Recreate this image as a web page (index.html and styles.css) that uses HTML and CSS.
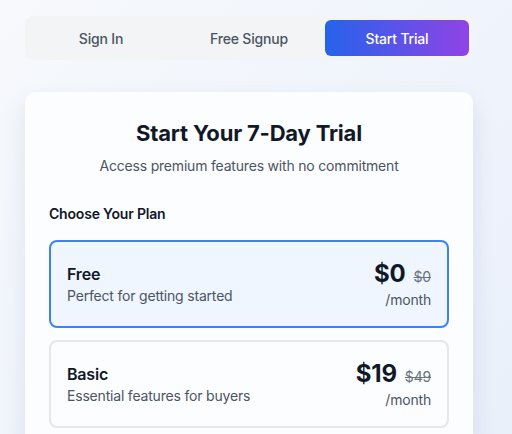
FILE: index.html
```html
<!DOCTYPE html>
<html>
<head>
<meta charset="utf-8">
<link rel="stylesheet" href="styles.css">
</head>
<body>
<div class="wrap">
  <nav class="tabs">
    <button class="tab">Sign In</button>
    <button class="tab">Free Signup</button>
    <button class="tab active">Start Trial</button>
  </nav>
  <main class="card">
    <h1 class="title">Start Your 7-Day Trial</h1>
    <p class="subtitle">Access premium features with no commitment</p>
    <h2 class="section">Choose Your Plan</h2>
    <div class="plans">
      <div class="plan selected">
        <div class="plan-info">
          <div class="plan-name">Free</div>
          <div class="plan-desc">Perfect for getting started</div>
        </div>
        <div class="plan-price">
          <div class="price-row"><span class="price">$0</span><span class="old">$0</span></div>
          <div class="per">/month</div>
        </div>
      </div>
      <div class="plan">
        <div class="plan-info">
          <div class="plan-name">Basic</div>
          <div class="plan-desc">Essential features for buyers</div>
        </div>
        <div class="plan-price">
          <div class="price-row"><span class="price">$19</span><span class="old">$49</span></div>
          <div class="per">/month</div>
        </div>
      </div>
    </div>
  </main>
</div>
</body>
</html>
```

FILE: styles.css
```css
* { box-sizing: border-box; }
html, body { margin: 0; padding: 0; }
body {
  font-family: Inter, "Noto Sans", sans-serif;
  letter-spacing: -0.012em;
  background: linear-gradient(135deg, #f7f9fc 0%, #eef3fc 60%, #e9effa 100%);
  min-height: 434px;
  color: #111827;
  overflow: hidden;
}
.wrap {
  width: 448px;
  margin-left: 25px;
  padding-top: 16px;
}
.tabs {
  display: grid;
  grid-template-columns: 1fr 1fr 1fr;
  gap: 4px;
  padding: 4px;
  background: #f3f4f6;
  border-radius: 8px;
}
.tab {
  height: 36px;
  border: 0;
  background: transparent;
  font-family: inherit;
  letter-spacing: inherit;
  font-size: 14px;
  font-weight: 500;
  color: #4b5563;
  border-radius: 6px;
  padding: 0;
}
.tab.active {
  background: linear-gradient(90deg, #2563eb, #9043e6);
  color: #fff;
}
.card {
  margin-top: 32px;
  background: #fcfdff;
  border-radius: 10px;
  padding: 24px 24px 24px;
  box-shadow: 0 10px 25px rgba(30, 50, 100, 0.1);
  min-height: 400px;
}
.title {
  margin: 0;
  text-align: center;
  font-size: 22px;
  line-height: 32px;
  font-weight: 700;
  color: #111827;
  padding-top: 1px;
}
.subtitle {
  margin: 7px 0 0;
  text-align: center;
  font-size: 14px;
  line-height: 20px;
  color: #4b5563;
}
.section {
  margin: 28px 0 0;
  font-size: 14px;
  line-height: 20px;
  font-weight: 600;
  color: #111827;
}
.plans {
  margin-top: 16px;
  display: flex;
  flex-direction: column;
  gap: 12px;
}
.plan {
  display: flex;
  justify-content: space-between;
  align-items: center;
  border: 2px solid #e5e7eb;
  border-radius: 8px;
  padding: 16px;
  background: #fcfdff;
}
.plan.selected {
  border-color: #3b82f6;
  background: #eff6ff;
}
.plan-name {
  font-size: 16px;
  line-height: 24px;
  font-weight: 600;
  color: #111827;
}
.plan-desc {
  font-size: 14px;
  line-height: 20px;
  color: #4b5563;
}
.plan-price { text-align: right; }
.price-row {
  display: flex;
  align-items: baseline;
  justify-content: flex-end;
  gap: 8px;
}
.price {
  font-size: 24px;
  line-height: 32px;
  font-weight: 700;
  color: #111827;
}
.old {
  font-size: 14px;
  color: #6b7280;
  text-decoration: line-through;
}
.per {
  font-size: 14px;
  line-height: 20px;
  color: #4b5563;
}
```
